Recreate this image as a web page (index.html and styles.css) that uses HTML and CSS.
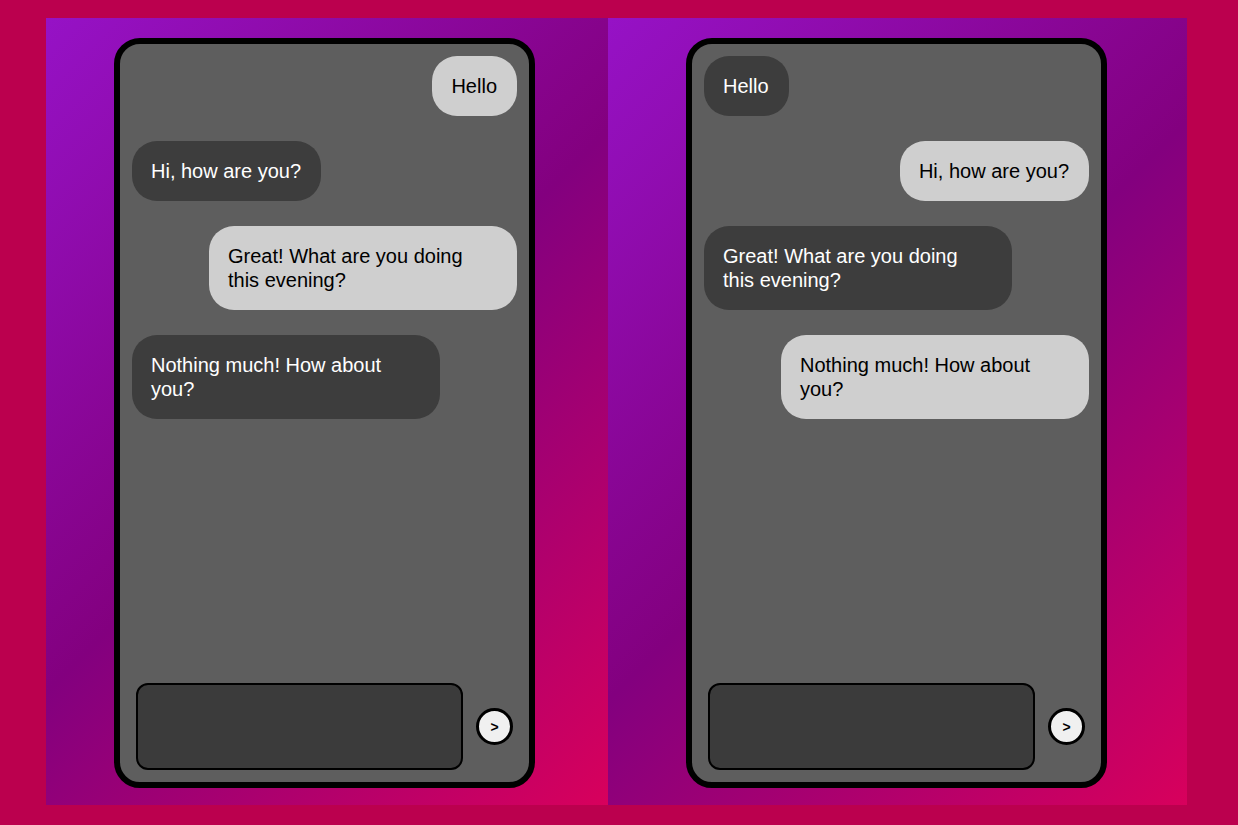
FILE: index.html
```html
<!DOCTYPE html>
<html lang="en">
<head>
<meta charset="utf-8">
<title>Chat</title>
<link rel="stylesheet" href="styles.css">
</head>
<body>
<div class="stage">
  <section class="panel panel-a">
    <div class="phone">
      <div class="messages">
        <div class="bubble sent">Hello</div>
        <div class="bubble received">Hi, how are you?</div>
        <div class="bubble sent">Great! What are you doing this evening?</div>
        <div class="bubble received">Nothing much! How about you?</div>
      </div>
      <div class="composer">
        <textarea class="input"></textarea>
        <button class="send">&gt;</button>
      </div>
    </div>
  </section>
  <section class="panel panel-b">
    <div class="phone">
      <div class="messages">
        <div class="bubble received">Hello</div>
        <div class="bubble sent">Hi, how are you?</div>
        <div class="bubble received">Great! What are you doing this evening?</div>
        <div class="bubble sent">Nothing much! How about you?</div>
      </div>
      <div class="composer">
        <textarea class="input"></textarea>
        <button class="send">&gt;</button>
      </div>
    </div>
  </section>
</div>
</body>
</html>
```
FILE: styles.css
```css
* { box-sizing: border-box; }

html, body {
  margin: 0;
  height: 100%;
}

body {
  background: #bb004e;
  font-family: "Liberation Sans", Arial, sans-serif;
  overflow: hidden;
}

.stage {
  display: flex;
  padding: 18px 0 0 46px;
}

.panel {
  height: 787px;
  padding-top: 20px;
  background: linear-gradient(135deg, #9612c6 0%, #83007f 50%, #d8005c 100%);
}

.panel-a {
  width: 562px;
  padding-left: 68px;
}

.panel-b {
  width: 579px;
  padding-left: 78px;
}

.phone {
  width: 421px;
  height: 750px;
  border: 6px solid #000;
  border-radius: 26px;
  background: #5e5e5e;
  padding: 12px;
  display: flex;
  flex-direction: column;
}

.messages {
  display: flex;
  flex-direction: column;
  gap: 25px;
}

.bubble {
  max-width: 80%;
  padding: 18px 20px 18px 19px;
  border-radius: 25px;
  font-size: 20px;
  line-height: 24px;
}

.sent {
  align-self: flex-end;
  background: #cfcfcf;
  color: #000;
}

.received {
  align-self: flex-start;
  background: #3d3d3d;
  color: #fff;
}

.composer {
  margin: auto 4px 0 4px;
  display: flex;
  align-items: center;
  gap: 13px;
}

.input {
  width: 327px;
  height: 87px;
  border: 2px solid #000;
  border-radius: 12px;
  background: #3b3b3b;
  resize: none;
  outline: none;
  color: #fff;
  font-family: "Liberation Sans", Arial, sans-serif;
}

.send {
  width: 37px;
  height: 37px;
  flex: none;
  border: 3px solid #000;
  border-radius: 50%;
  background: #f0f0f0;
  color: #000;
  font-family: "Liberation Sans", Arial, sans-serif;
  font-size: 14px;
  font-weight: bold;
  padding: 0;
  display: flex;
  align-items: center;
  justify-content: center;
}
```
